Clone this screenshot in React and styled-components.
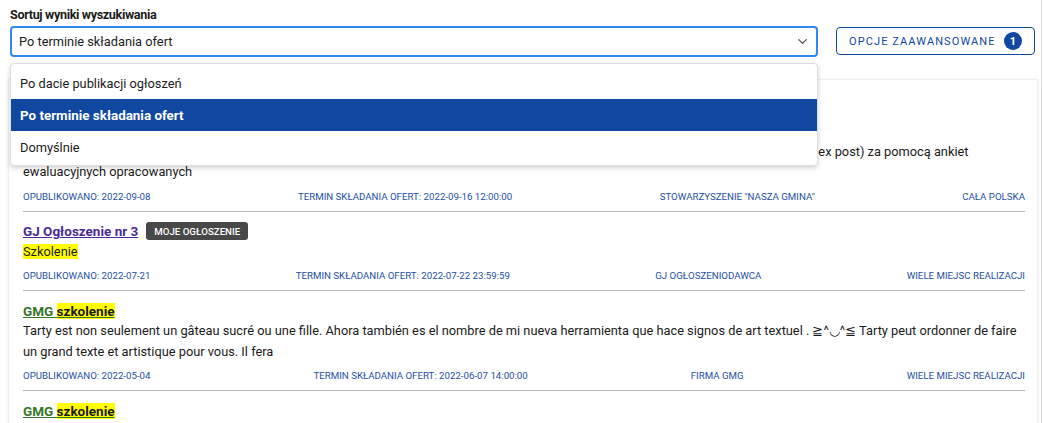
import React from "react";
import styled, { createGlobalStyle } from "styled-components";
import { ChevronDown } from "lucide-react";

const theme = {
  blue: "#0f47a1",
  focus: "#3088f4",
  meta: "#1d4fa6",
  divider: "#b9b9b9",
  visited: "#4b2a99",
  green: "#37752c",
  mark: "#ffff00",
};

const GlobalStyle = createGlobalStyle`
  * { box-sizing: border-box; }
  body {
    margin: 0;
    font-family: Roboto, "Liberation Sans", Arial, sans-serif;
    color: #1b1b1b;
    background: #fff;
  }
`;

const Page = styled.div`
  width: 1042px;
  height: 423px;
  overflow: hidden;
  padding: 6px 6px 0 10px;
  border-right: 1px solid #dcdcdc;
`;

const TopRow = styled.div`
  display: flex;
  align-items: flex-end;
  gap: 18px;
`;

const SortColumn = styled.div`
  flex: 1;
  display: flex;
  flex-direction: column;
  gap: 2px;
`;

const Label = styled.div`
  font-size: 12.6px;
  font-weight: 700;
  letter-spacing: -0.35px;
  line-height: 18px;
`;

const SelectWrap = styled.div`
  position: relative;
`;

const SelectBox = styled.div`
  height: 31px;
  border: 2px solid ${theme.focus};
  border-radius: 4px;
  display: flex;
  align-items: center;
  justify-content: space-between;
  padding: 0 6px 0 7px;
  font-size: 12.8px;
  color: #222;
  svg {
    color: #555;
  }
`;

const Menu = styled.ul`
  position: absolute;
  top: calc(100% + 6px);
  left: 0;
  right: 0;
  margin: 0;
  padding: 3px 0 2px;
  list-style: none;
  background: #fff;
  border: 1px solid #dedede;
  border-radius: 4px;
  box-shadow: 0 2px 5px rgba(0, 0, 0, 0.18);
  z-index: 5;
`;

const Option = styled.li`
  height: 32px;
  display: flex;
  align-items: center;
  padding-left: 9px;
  font-size: ${(p) => (p.selected ? "13.4px" : "12.8px")};
  font-weight: ${(p) => (p.selected ? 700 : 400)};
  color: ${(p) => (p.selected ? "#fff" : "#1b1b1b")};
  background: ${(p) => (p.selected ? theme.blue : "transparent")};
`;

const AdvancedButton = styled.button`
  width: 199px;
  height: 28px;
  margin-bottom: 2px;
  display: flex;
  align-items: center;
  justify-content: space-between;
  padding: 0 12px;
  background: #fff;
  border: 1px solid ${theme.blue};
  border-radius: 4px;
  color: ${theme.blue};
  font-family: inherit;
  font-size: 11px;
  font-weight: 400;
  letter-spacing: 1.1px;
  white-space: nowrap;
  cursor: pointer;
`;

const CountBadge = styled.span`
  width: 18px;
  height: 18px;
  border-radius: 50%;
  background: ${theme.blue};
  color: #fff;
  font-size: 11px;
  font-weight: 700;
  letter-spacing: 0;
  display: flex;
  align-items: center;
  justify-content: center;
`;

const ResultsCard = styled.div`
  margin: 22px -3px 0 -2px;
  padding: 11px 12px 0 14px;
  border: 1px solid #efefef;
  box-shadow: 0 1px 4px rgba(0, 0, 0, 0.08);
`;

const Item = styled.div`
  padding: 9px 0 8px;
  border-bottom: 1px solid ${theme.divider};
`;

const TitleRow = styled.div`
  display: flex;
  align-items: center;
  gap: 8px;
  height: 21px;
`;

const TitleLink = styled.a`
  font-size: 13.5px;
  font-weight: 700;
  color: ${(p) => p.color};
  text-decoration: underline;
`;

const Mark = styled.span`
  background: ${theme.mark};
  color: #1b1b1b;
`;

const MineBadge = styled.span`
  height: 18px;
  display: inline-flex;
  align-items: center;
  padding: 0 8px;
  border-radius: 3px;
  background: #484848;
  color: #fff;
  font-size: 9.7px;
  font-weight: 500;
  text-transform: uppercase;
`;

const Description = styled.div`
  font-size: 12.8px;
  line-height: 20.5px;
  color: #1b1b1b;
`;

const MetaRow = styled.div`
  display: flex;
  justify-content: space-between;
  margin-top: 8px;
  font-size: 9.7px;
  line-height: 12px;
  color: ${theme.meta};
  text-transform: uppercase;
`;

const options = [
  { label: "Po dacie publikacji ogłoszeń" },
  { label: "Po terminie składania ofert", selected: true },
  { label: "Domyślnie" },
];

const results = [
  {
    title: "Ewaluacja projektu szkoleniowego",
    color: theme.visited,
    desc: [
      "Szkolenie z zakresu ewaluacji projektów społecznych.",
      "Celem zamówienia jest przeprowadzenie badania ewaluacyjnego projektu realizowanego w ramach programu rozwoju lokalnego (ewaluacja ex post) za pomocą ankiet ewaluacyjnych opracowanych",
    ],
    meta: [
      "Opublikowano: 2022-09-08",
      "Termin składania ofert: 2022-09-16 12:00:00",
      'Stowarzyszenie "Nasza Gmina"',
      "Cała Polska",
    ],
  },
  {
    title: "GJ Ogłoszenie nr 3",
    color: theme.visited,
    mine: true,
    desc: [<Mark key="m">Szkolenie</Mark>],
    meta: [
      "Opublikowano: 2022-07-21",
      "Termin składania ofert: 2022-07-22 23:59:59",
      "GJ Ogłoszeniodawca",
      "Wiele miejsc realizacji",
    ],
  },
  {
    gmg: true,
    desc: [
      "Tarty est non seulement un gâteau sucré ou une fille. Ahora también es el nombre de mi nueva herramienta que hace signos de art textuel . ≧^◡^≦ Tarty peut ordonner de faire un grand texte et artistique pour vous. Il fera",
    ],
    meta: [
      "Opublikowano: 2022-05-04",
      "Termin składania ofert: 2022-06-07 14:00:00",
      "Firma GMG",
      "Wiele miejsc realizacji",
    ],
  },
  {
    gmg: true,
    desc: ["Tarty est non seulement un gâteau sucré ou une fille."],
    meta: [
      "Opublikowano: 2022-05-04",
      "Termin składania ofert: 2022-06-07 14:00:00",
      "Firma GMG",
      "Wiele miejsc realizacji",
    ],
  },
];

const ResultItem = ({ item }) => (
  <Item>
    <TitleRow>
      {item.gmg ? (
        <TitleLink href="#" color={theme.green}>
          GMG <Mark>szkolenie</Mark>
        </TitleLink>
      ) : (
        <TitleLink href="#" color={item.color}>
          {item.title}
        </TitleLink>
      )}
      {item.mine && <MineBadge>Moje ogłoszenie</MineBadge>}
    </TitleRow>
    {item.desc.map((d, i) => (
      <Description key={i}>{d}</Description>
    ))}
    <MetaRow>
      {item.meta.map((m) => (
        <span key={m}>{m}</span>
      ))}
    </MetaRow>
  </Item>
);

const App = () => {
  return (
    <Page>
      <GlobalStyle />
      <TopRow>
        <SortColumn>
          <Label>Sortuj wyniki wyszukiwania</Label>
          <SelectWrap>
            <SelectBox>
              Po terminie składania ofert
              <ChevronDown size={15} strokeWidth={2.2} />
            </SelectBox>
            <Menu>
              {options.map((o) => (
                <Option key={o.label} selected={o.selected}>
                  {o.label}
                </Option>
              ))}
            </Menu>
          </SelectWrap>
        </SortColumn>
        <AdvancedButton>
          OPCJE ZAAWANSOWANE
          <CountBadge>1</CountBadge>
        </AdvancedButton>
      </TopRow>
      <ResultsCard>
        {results.map((r, i) => (
          <ResultItem key={i} item={r} />
        ))}
      </ResultsCard>
    </Page>
  );
};

export default App;
